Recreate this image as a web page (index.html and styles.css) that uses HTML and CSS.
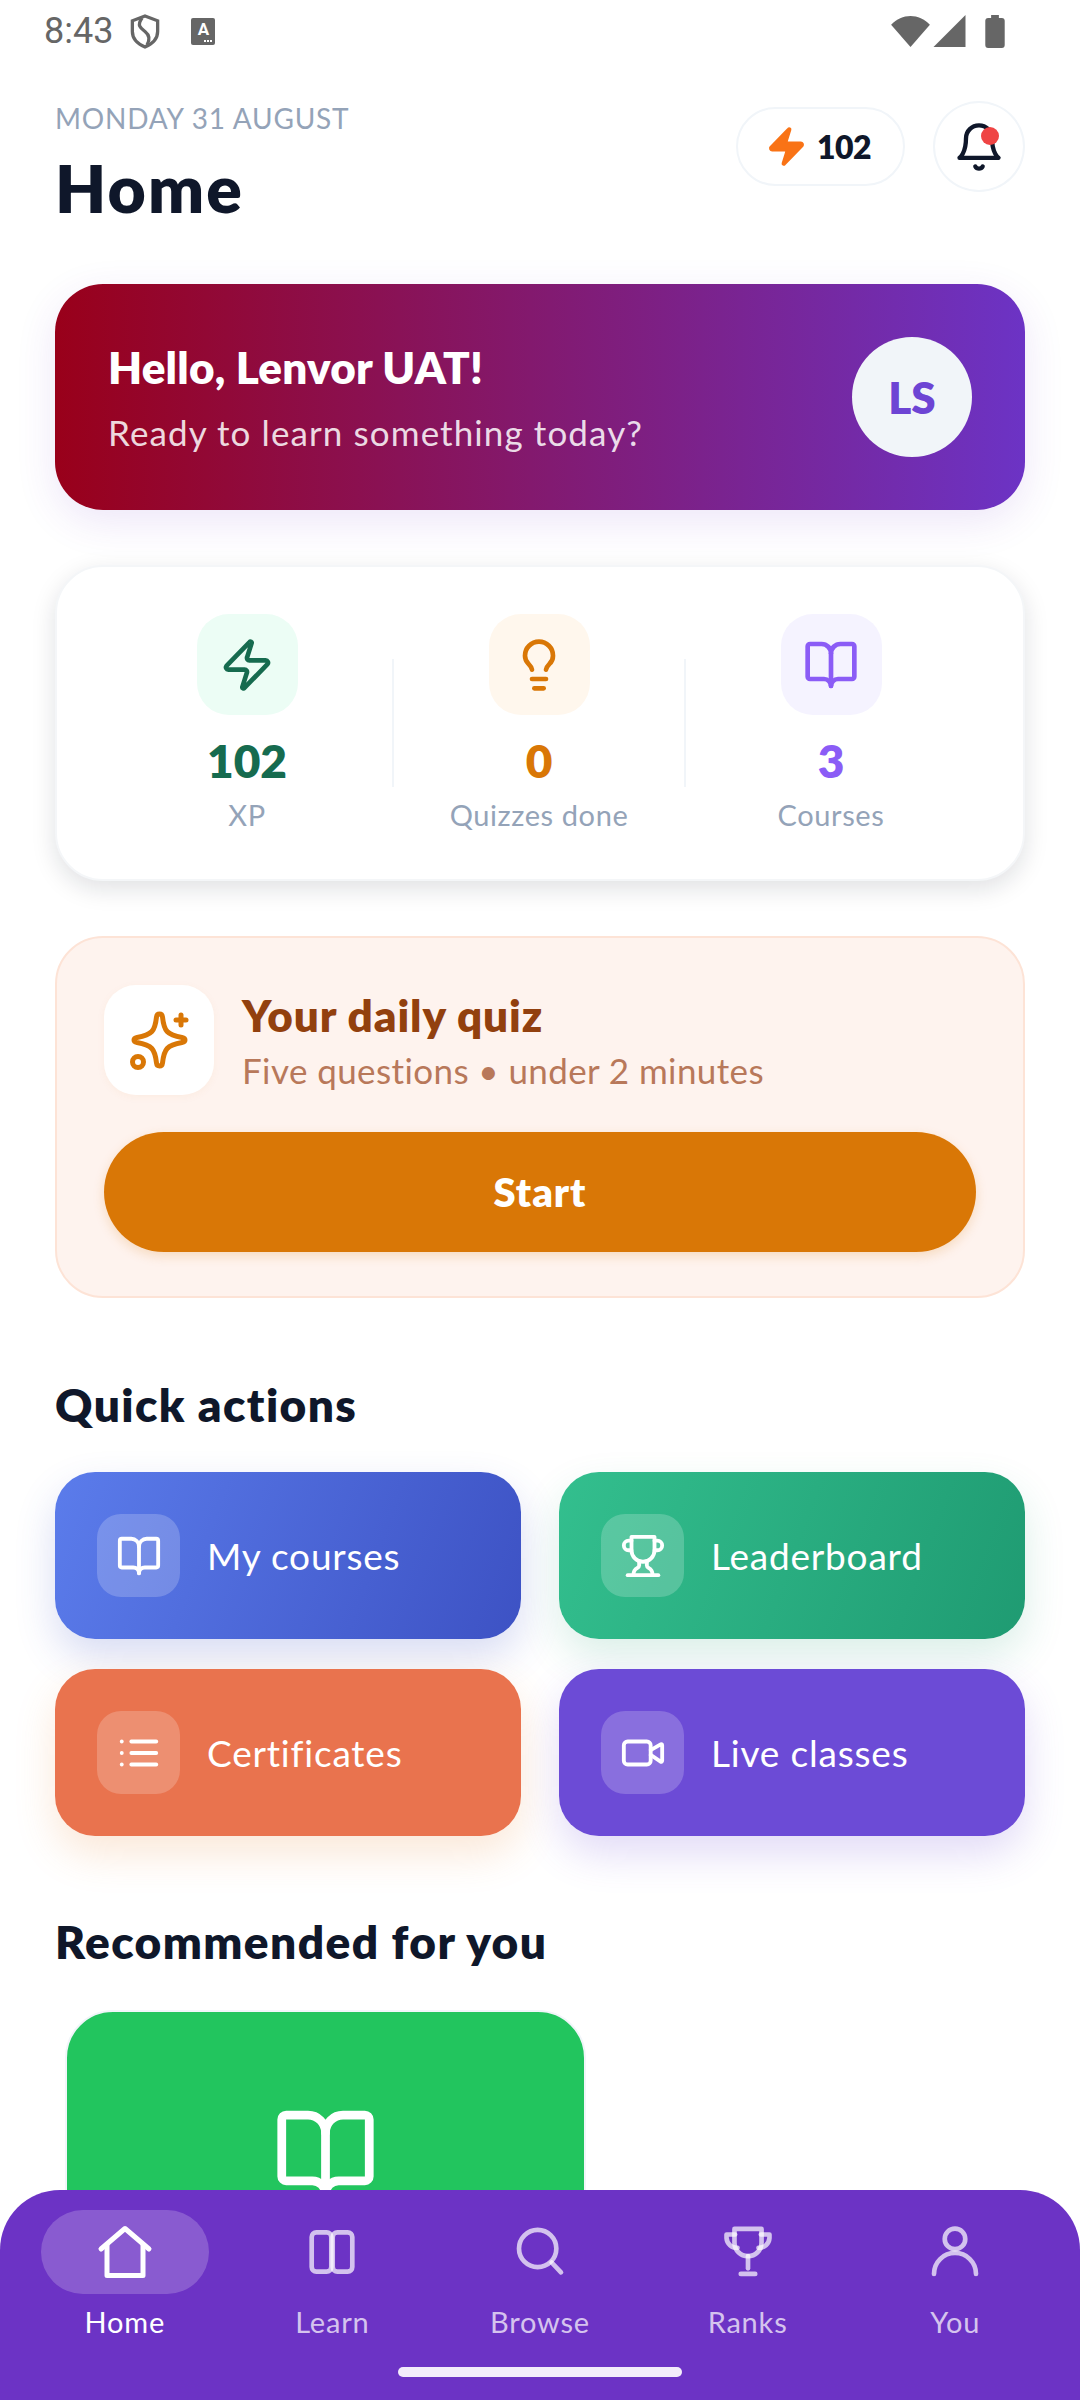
FILE: index.html
```html
<!DOCTYPE html>
<html lang="en">
<head>
    <meta charset="UTF-8">
    <meta name="viewport" content="width=device-width, initial-scale=1.0">
    <title>Home</title>
    <link rel="stylesheet" href="styles.css">
</head>
<body>
<div class="phone">
    <!-- Status Bar -->
    <div class="status-bar">
        <div class="status-left">
            <span class="status-time">8:43</span>
            <svg class="shield" viewBox="0 0 30 36" width="30" height="35"><path d="M15 2 L28 7 V18 C28 26 22 31 15 34 C8 31 2 26 2 18 V7 Z" fill="none" stroke="#666" stroke-width="3.4"/><path d="M12 4 C6 12 11 15 15 18 C20 22 20 27 17 32" fill="none" stroke="#666" stroke-width="3.4"/></svg>
            <span class="a-icon">A</span>
        </div>
        <div class="status-right">
            <svg viewBox="0 0 40 33" width="39" height="32"><path d="M0 10 C11 -2 29 -2 40 10 L20 33 Z" fill="#666"/></svg>
            <svg viewBox="0 0 33 33" width="33" height="32"><path d="M33 0 V33 H0 Z" fill="#666"/></svg>
            <svg class="battery" viewBox="0 0 20 34" width="20" height="33"><path d="M6 0 H14 V3 H17 A3 3 0 0 1 20 6 V31 A3 3 0 0 1 17 34 H3 A3 3 0 0 1 0 31 V6 A3 3 0 0 1 3 3 H6 Z" fill="#666"/></svg>
        </div>
    </div>

    <!-- Header -->
    <header class="top-header">
        <div>
            <div class="date-text">MONDAY 31 AUGUST</div>
            <h1>Home</h1>
        </div>
        <div class="header-actions">
            <div class="xp-pill">
                <svg viewBox="0 0 24 24" width="43" height="43"><path d="M4 14a1 1 0 0 1-.78-1.63l9.900-10.200a.5.5 0 0 1 .86.46l-1.920 6.020A1 1 0 0 0 13 10h7a1 1 0 0 1 .78 1.630l-9.900 10.200a.5.5 0 0 1-.86-.46l1.920-6.020A1 1 0 0 0 11 14z" fill="#f97316" stroke="#f97316" stroke-width="1.500" stroke-linejoin="round"/></svg>
                <span>102</span>
            </div>
            <div class="bell-btn">
                <svg viewBox="0 0 24 24" width="52" height="52" fill="none" stroke="#0f172a" stroke-width="2" stroke-linecap="round" stroke-linejoin="round"><path d="M6 8a6 6 0 0 1 12 0c0 7 3 9 3 9H3s3-2 3-9"/><path d="M10.300 21a1.940 1.940 0 0 0 3.400 0"/></svg>
                <span class="bell-dot"></span>
            </div>
        </div>
    </header>

    <!-- Hello Card -->
    <section class="hero">
        <div>
            <div class="hero-name">Hello, Lenvor UAT!</div>
            <div class="hero-sub">Ready to learn something today?</div>
        </div>
        <div class="avatar">LS</div>
    </section>

    <!-- Stats -->
    <section class="stats">
        <div class="stat">
            <div class="stat-icon green-bg">
                <svg viewBox="0 0 24 24" width="56" height="56" fill="none" stroke="#166b4f" stroke-width="2" stroke-linecap="round" stroke-linejoin="round"><path d="M4 14a1 1 0 0 1-.78-1.630l9.900-10.200a.5.5 0 0 1 .86.46l-1.920 6.020A1 1 0 0 0 13 10h7a1 1 0 0 1 .78 1.630l-9.900 10.200a.5.5 0 0 1-.86-.46l1.920-6.020A1 1 0 0 0 11 14z"/></svg>
            </div>
            <div class="stat-num green">102</div>
            <div class="stat-label">XP</div>
        </div>
        <div class="stat-line"></div>
        <div class="stat">
            <div class="stat-icon orange-bg">
                <svg viewBox="0 0 24 24" width="56" height="56" fill="none" stroke="#d97706" stroke-width="2" stroke-linecap="round" stroke-linejoin="round"><path d="M15 14c.2-1 .7-1.700 1.500-2.500 1-.9 1.500-2.200 1.500-3.500A6 6 0 0 0 6 8c0 1 .2 2.200 1.500 3.500.7.7 1.300 1.500 1.500 2.500"/><path d="M9 18h6"/><path d="M10 22h4"/></svg>
            </div>
            <div class="stat-num orange">0</div>
            <div class="stat-label">Quizzes done</div>
        </div>
        <div class="stat-line"></div>
        <div class="stat">
            <div class="stat-icon purple-bg">
                <svg viewBox="0 0 24 24" width="56" height="56" fill="none" stroke="#8b5cf6" stroke-width="2" stroke-linecap="round" stroke-linejoin="round"><path d="M12 7v14"/><path d="M3 18a1 1 0 0 1-1-1V4a1 1 0 0 1 1-1h5a4 4 0 0 1 4 4 4 4 0 0 1 4-4h5a1 1 0 0 1 1 1v13a1 1 0 0 1-1 1h-6a3 3 0 0 0-3 3 3 3 0 0 0-3-3z"/></svg>
            </div>
            <div class="stat-num purple">3</div>
            <div class="stat-label">Courses</div>
        </div>
    </section>

    <!-- Daily Quiz -->
    <section class="quiz">
        <div class="quiz-top">
            <div class="quiz-icon">
                <svg viewBox="0 0 72 72" width="72" height="72" fill="none" stroke="#d97706" stroke-width="5" stroke-linecap="round" stroke-linejoin="round"><path d="M33.500 13 C34 9 39 9 39.500 13 C41 27 44 31 59 33.500 C63 34.200 63 37.800 59 38.500 C44 41 41 45 39.500 59 C39 63 34 63 33.500 59 C32 45 29 41 14 38.500 C10 37.800 10 34.200 14 33.500 C29 31 32 27 33.500 13 Z"/><path d="M53 16H63"/><path d="M58 11V21"/><circle cx="15" cy="58" r="5.500"/></svg>
            </div>
            <div>
                <div class="quiz-title">Your daily quiz</div>
                <div class="quiz-sub">Five questions • under 2 minutes</div>
            </div>
        </div>
        <div class="start-btn">Start</div>
    </section>

    <!-- Quick Actions -->
    <h2 class="section-title">Quick actions</h2>
    <div class="actions">
        <div class="action blue">
            <div class="action-icon">
                <svg viewBox="0 0 24 24" width="46" height="46" fill="none" stroke="#fff" stroke-width="2" stroke-linecap="round" stroke-linejoin="round"><path d="M12 7v14"/><path d="M3 18a1 1 0 0 1-1-1V4a1 1 0 0 1 1-1h5a4 4 0 0 1 4 4 4 4 0 0 1 4-4h5a1 1 0 0 1 1 1v13a1 1 0 0 1-1 1h-6a3 3 0 0 0-3 3 3 3 0 0 0-3-3z"/></svg>
            </div>
            <span>My courses</span>
        </div>
        <div class="action teal">
            <div class="action-icon">
                <svg viewBox="0 0 24 24" width="46" height="46" fill="none" stroke="#fff" stroke-width="2" stroke-linecap="round" stroke-linejoin="round"><path d="M6 9H4.500a2.500 2.500 0 0 1 0-5H6"/><path d="M18 9h1.500a2.500 2.500 0 0 0 0-5H18"/><path d="M4 22h16"/><path d="M10 14.660V17c0 .55-.47.98-.97 1.210C7.850 18.750 7 20.240 7 22"/><path d="M14 14.660V17c0 .55.47.98.97 1.210C16.150 18.750 17 20.240 17 22"/><path d="M18 2H6v7a6 6 0 0 0 12 0V2Z"/></svg>
            </div>
            <span>Leaderboard</span>
        </div>
        <div class="action coral">
            <div class="action-icon">
                <svg viewBox="0 0 24 24" width="46" height="46" fill="none" stroke="#fff" stroke-width="2" stroke-linecap="round" stroke-linejoin="round"><path d="M8 6h13"/><path d="M8 12h13"/><path d="M8 18h13"/><path d="M3 6h.01"/><path d="M3 12h.01"/><path d="M3 18h.01"/></svg>
            </div>
            <span>Certificates</span>
        </div>
        <div class="action violet">
            <div class="action-icon">
                <svg viewBox="0 0 24 24" width="46" height="46" fill="none" stroke="#fff" stroke-width="2" stroke-linecap="round" stroke-linejoin="round"><path d="m16 13 5.200 3.500a.5.5 0 0 0 .8-.4V7.900a.5.5 0 0 0-.8-.4L16 10.500"/><rect x="2" y="6" width="14" height="12" rx="2"/></svg>
            </div>
            <span>Live classes</span>
        </div>
    </div>

    <!-- Recommended -->
    <h2 class="section-title rec-title">Recommended for you</h2>
    <div class="rec-card">
        <svg viewBox="0 0 24 24" width="105" height="105" fill="none" stroke="#fff" stroke-width="2" stroke-linecap="round" stroke-linejoin="round"><path d="M12 7v14"/><path d="M3 18a1 1 0 0 1-1-1V4a1 1 0 0 1 1-1h5a4 4 0 0 1 4 4 4 4 0 0 1 4-4h5a1 1 0 0 1 1 1v13a1 1 0 0 1-1 1h-6a3 3 0 0 0-3 3 3 3 0 0 0-3-3z"/></svg>
    </div>

    <!-- Bottom Nav -->
    <nav class="bottom-nav">
        <div class="nav-items">
            <div class="nav-item active">
                <div class="nav-icon">
                    <svg viewBox="0 0 24 24" width="60" height="60" fill="none" stroke="#fff" stroke-width="2" stroke-linecap="round" stroke-linejoin="round"><path d="M2.400 10.800 12 2.600l9.600 8.200"/><path d="M4.800 9V21.400H19.200V9"/></svg>
                </div>
                <span>Home</span>
            </div>
            <div class="nav-item">
                <div class="nav-icon">
                    <svg viewBox="0 0 24 24" width="56" height="56" fill="none" stroke="#fff" stroke-opacity="0.7" stroke-width="2" stroke-linecap="round" stroke-linejoin="round"><rect x="3.300" y="3.600" width="8.400" height="16.800" rx="2"/><rect x="12.300" y="3.600" width="8.400" height="16.800" rx="2"/></svg>
                </div>
                <span>Learn</span>
            </div>
            <div class="nav-item">
                <div class="nav-icon">
                    <svg viewBox="0 0 24 24" width="56" height="56" fill="none" stroke="#fff" stroke-opacity="0.7" stroke-width="2" stroke-linecap="round" stroke-linejoin="round"><circle cx="11" cy="10.500" r="8"/><path d="m17 16.500 4 4.200"/></svg>
                </div>
                <span>Browse</span>
            </div>
            <div class="nav-item">
                <div class="nav-icon">
                    <svg viewBox="0 0 24 24" width="56" height="56" fill="none" stroke="#fff" stroke-opacity="0.7" stroke-width="2" stroke-linecap="round" stroke-linejoin="round"><path d="M6.200 2.100H17.800V8A5.800 5.800 0 0 1 6.200 8Z"/><path d="M6.500 4.500H2.800V6A4.500 4.500 0 0 0 7.500 10.200"/><path d="M17.500 4.500H21.200V6A4.500 4.500 0 0 1 16.500 10.200"/><path d="M12 13.800V19"/><path d="M8.900 21.400H15.100"/></svg>
                </div>
                <span>Ranks</span>
            </div>
            <div class="nav-item">
                <div class="nav-icon">
                    <svg viewBox="0 0 24 24" width="56" height="56" fill="none" stroke="#fff" stroke-opacity="0.7" stroke-width="2" stroke-linecap="round" stroke-linejoin="round"><circle cx="12" cy="6.400" r="4.400"/><path d="M3 21.400A9 9 0 0 1 21 21.400"/></svg>
                </div>
                <span>You</span>
            </div>
        </div>
        <div class="home-bar"></div>
    </nav>
</div>
</body>
</html>
```

FILE: styles.css
```css
* {
    margin: 0;
    padding: 0;
    box-sizing: border-box;
    font-family: 'Lato', sans-serif;
}

body {
    background: white;
}

.phone {
    position: relative;
    width: 1080px;
    height: 2400px;
    overflow: hidden;
    background: white;
}

/* Status Bar */
.status-bar {
    display: flex;
    justify-content: space-between;
    align-items: center;
    height: 62px;
    padding: 0 75px 0 44px;
}

.status-left, .status-right {
    display: flex;
    align-items: center;
}

.status-time {
    font-family: 'Roboto', sans-serif;
    font-size: 36px;
    color: #666;
    margin-right: 17px;
}

.shield {
    margin-right: 31px;
}

.a-icon {
    position: relative;
    width: 24px;
    height: 27px;
    background: #666;
    border-radius: 2px;
    color: white;
    font-family: 'Roboto', sans-serif;
    font-size: 17px;
    font-weight: bold;
    text-align: center;
    line-height: 22px;
}

.a-icon::after {
    content: "";
    position: absolute;
    left: 13px;
    bottom: 3px;
    width: 2px;
    height: 2px;
    background: white;
    box-shadow: 3px 0 white, 6px 0 white;
}

.status-right {
    gap: 3px;
}

.battery {
    margin-left: 16px;
}

/* Header */
.top-header {
    display: flex;
    justify-content: space-between;
    align-items: flex-start;
    padding: 39px 55px 0;
    height: 222px;
}

.date-text {
    font-size: 28px;
    letter-spacing: 0.8px;
    color: #94a3b8;
    line-height: 34px;
}

.top-header h1 {
    font-size: 66px;
    font-weight: 800;
    letter-spacing: 2.2px;
    color: #0f172a;
    line-height: 78px;
    margin-top: 14px;
}

.header-actions {
    display: flex;
    align-items: center;
    gap: 28px;
}

.xp-pill {
    display: flex;
    align-items: center;
    gap: 9px;
    width: 169px;
    height: 79px;
    padding-left: 27px;
    border: 2px solid #f1f5f9;
    border-radius: 40px;
}

.xp-pill span {
    font-size: 32px;
    font-weight: 800;
    letter-spacing: -0.5px;
    color: #0f172a;
}

.bell-btn {
    position: relative;
    display: flex;
    align-items: center;
    justify-content: center;
    width: 92px;
    height: 91px;
    border: 2px solid #f1f5f9;
    border-radius: 50%;
}

.bell-dot {
    position: absolute;
    top: 24px;
    right: 24px;
    width: 18px;
    height: 18px;
    background: #ef4444;
    border-radius: 50%;
}

/* Hello Card */
.hero {
    display: flex;
    justify-content: space-between;
    align-items: center;
    height: 226px;
    margin: 0 55px;
    padding: 0 53px;
    background: linear-gradient(90deg, #99001a, #6c33c5);
    border-radius: 48px;
    box-shadow: 0 12px 40px rgba(108,51,197,0.12);
}

.hero-name {
    font-size: 44px;
    font-weight: 800;
    letter-spacing: 0.2px;
    color: white;
}

.hero-sub {
    font-size: 35px;
    letter-spacing: 1.1px;
    color: rgba(255,255,255,0.85);
    margin-top: 18px;
}

.avatar {
    display: flex;
    align-items: center;
    justify-content: center;
    width: 120px;
    height: 120px;
    background: #f1f5f9;
    border-radius: 50%;
    font-size: 44px;
    font-weight: 800;
    color: #6d44d4;
}

/* Stats */
.stats {
    display: flex;
    align-items: center;
    height: 316px;
    margin: 55px 55px 0;
    padding: 0 47px 0 45px;
    background: white;
    border: 2px solid #f4f6f8;
    border-radius: 48px;
    box-shadow: 0 8px 24px rgba(15,23,42,0.13);
}

.stat {
    flex: 1;
    display: flex;
    flex-direction: column;
    align-items: center;
}

.stat-icon {
    display: flex;
    align-items: center;
    justify-content: center;
    width: 101px;
    height: 101px;
    border-radius: 32px;
}

.green-bg { background: #ecfdf5; }
.orange-bg { background: #fff7ed; }
.purple-bg { background: #f5f3ff; }

.stat-num {
    font-size: 46px;
    font-weight: 800;
    line-height: 56px;
    margin-top: 18px;
}

.green { color: #166b4f; }
.orange { color: #d97706; }
.purple { color: #8b5cf6; }

.stat-label {
    font-size: 29px;
    letter-spacing: 0.6px;
    color: #94a3b8;
    line-height: 34px;
    margin-top: 9px;
}

.stat-line {
    width: 2px;
    height: 128px;
    background: #f1f5f9;
}

/* Daily Quiz */
.quiz {
    height: 362px;
    margin: 55px 55px 0;
    padding: 47px 47px 0;
    background: #fef3ee;
    border: 2px solid #fde3d6;
    border-radius: 48px;
}

.quiz-top {
    display: flex;
    align-items: center;
    gap: 28px;
}

.quiz-icon {
    display: flex;
    align-items: center;
    justify-content: center;
    width: 110px;
    height: 110px;
    background: white;
    border-radius: 32px;
    box-shadow: 0 2px 8px rgba(217,119,6,0.05);
}

.quiz-title {
    font-size: 44px;
    font-weight: 800;
    letter-spacing: 0.9px;
    color: #92400e;
}

.quiz-sub {
    font-size: 35px;
    letter-spacing: 0.4px;
    color: #b8785a;
    margin-top: 8px;
}

.start-btn {
    height: 120px;
    margin-top: 37px;
    background: #d97706;
    border-radius: 60px;
    box-shadow: 0 4px 12px rgba(217,119,6,0.2);
    color: white;
    font-size: 40px;
    font-weight: 800;
    letter-spacing: 1px;
    line-height: 120px;
    text-align: center;
}

/* Quick Actions */
.section-title {
    font-size: 46px;
    font-weight: 800;
    letter-spacing: 1.4px;
    color: #0f172a;
    line-height: 54px;
    margin: 80px 55px 0;
}

.actions {
    display: grid;
    grid-template-columns: 466px 466px;
    grid-auto-rows: 167px;
    gap: 30px 38px;
    margin: 40px 55px 0;
}

.action {
    display: flex;
    align-items: center;
    gap: 27px;
    padding-left: 42px;
    border-radius: 40px;
    color: white;
    font-size: 37px;
    letter-spacing: 0.8px;
}

.action-icon {
    display: flex;
    align-items: center;
    justify-content: center;
    width: 83px;
    height: 83px;
    background: rgba(255,255,255,0.2);
    border-radius: 24px;
}

.blue {
    background: linear-gradient(110deg, #5b7ceb, #3d52c4);
    box-shadow: 0 18px 40px rgba(61,82,196,0.2);
}

.teal {
    background: linear-gradient(110deg, #33bf8e, #1f9b72);
    box-shadow: 0 18px 40px rgba(31,155,114,0.16);
}

.coral {
    background: #e9734e;
    box-shadow: 0 18px 40px rgba(233,140,60,0.2);
}

.violet {
    background: #6c4bd6;
    box-shadow: 0 18px 40px rgba(108,75,214,0.2);
}

/* Recommended */
.rec-title {
    margin-top: 79px;
}

.rec-card {
    display: flex;
    justify-content: center;
    width: 521px;
    height: 300px;
    margin: 41px 0 0 65px;
    padding-top: 90px;
    background: #22c55e;
    border: 2px solid #f1f5f9;
    border-radius: 48px;
}

/* Bottom Nav */
.bottom-nav {
    position: absolute;
    left: 0;
    right: 0;
    bottom: 0;
    height: 210px;
    padding-top: 20px;
    background: #6c33c5;
    border-radius: 60px 60px 0 0;
}

.nav-items {
    display: flex;
    padding: 0 21px;
}

.nav-item {
    flex: 1;
    display: flex;
    flex-direction: column;
    align-items: center;
    color: #d5c3ee;
    font-size: 29px;
    letter-spacing: 0.8px;
    line-height: 34px;
}

.nav-icon {
    display: flex;
    align-items: center;
    justify-content: center;
    width: 168px;
    height: 84px;
    border-radius: 42px;
    margin-bottom: 11px;
}

.nav-item.active {
    color: white;
}

.active .nav-icon {
    background: rgba(255,255,255,0.2);
}

.home-bar {
    width: 284px;
    height: 10px;
    margin: 28px auto 0;
    background: #f3ecfb;
    border-radius: 5px;
}
```
